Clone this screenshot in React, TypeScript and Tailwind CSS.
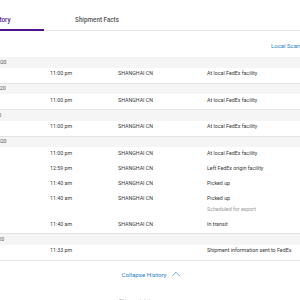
import { ChevronUp } from "lucide-react";

type Scan = { time: string; location: string; activity: string; note?: string };
type Day = { date: string; scans: Scan[] };

const HISTORY: Day[] = [
  {
    date: "Tuesday , 4/28/2020",
    scans: [{ time: "11:00 pm", location: "SHANGHAI CN", activity: "At local FedEx facility" }],
  },
  {
    date: "Monday , 4/27/2020",
    scans: [{ time: "11:00 pm", location: "SHANGHAI CN", activity: "At local FedEx facility" }],
  },
  {
    date: "Friday , 4/24/2020",
    scans: [{ time: "11:00 pm", location: "SHANGHAI CN", activity: "At local FedEx facility" }],
  },
  {
    date: "Tuesday , 4/21/2020",
    scans: [
      { time: "11:00 pm", location: "SHANGHAI CN", activity: "At local FedEx facility" },
      { time: "12:59 pm", location: "SHANGHAI CN", activity: "Left FedEx origin facility" },
      { time: "11:40 am", location: "SHANGHAI CN", activity: "Picked up" },
      { time: "11:40 am", location: "SHANGHAI CN", activity: "Picked up", note: "Scheduled for export" },
      { time: "11:40 am", location: "SHANGHAI CN", activity: "In transit" },
    ],
  },
  {
    date: "Monday, 4/20/2020",
    scans: [{ time: "11:33 pm", location: "", activity: "Shipment information sent to FedEx" }],
  },
];

function ScanRow({ scan }: { scan: Scan }) {
  return (
    <div className="grid grid-cols-[112px_68px_89px_1fr] pt-[3.5px] pb-[6.5px] text-[5.3px] leading-[5px] text-[#383838]">
      <div />
      <div>{scan.time}</div>
      <div>{scan.location}</div>
      <div>
        <div>{scan.activity}</div>
        {scan.note && <div className="mt-[6px] text-[#9a9a9a]">{scan.note}</div>}
      </div>
    </div>
  );
}

export default function App() {
  return (
    <div className="h-[300px] w-[300px] overflow-hidden bg-white font-['Roboto',sans-serif]">
      <div className="ml-[-62px] w-[420px]">
        <div className="flex border-b border-[#e6e6e6] pt-[16px]">
          <div className="-mb-px w-[106px] border-b-2 border-[#4d148c] pb-[4px] text-center text-[6.3px] font-medium text-[#4d148c]">
            Travel History
          </div>
          <div className="w-[106px] pb-[4px] text-center text-[6.3px] font-medium text-[#555]">
            Shipment Facts
          </div>
        </div>

        <div className="flex h-[26px] items-center pt-[3px] pl-[333px] text-[6px] text-[#2a83c6]">
          Local Scan Time
        </div>

        {HISTORY.map((day) => (
          <div key={day.date} className="border-b border-[#e3e3e3]">
            <div className="flex h-[10.5px] items-center bg-[#f5f5f5] pl-[20px] text-[5.3px] text-[#555]">
              {day.date}
            </div>
            {day.scans.map((scan, i) => (
              <ScanRow key={i} scan={scan} />
            ))}
          </div>
        ))}

        <div className="flex h-[28px] items-center justify-center gap-[2px] pt-[1px] pl-[8px] text-[6.2px] text-[#2a83c6]">
          <span>Collapse History</span>
          <ChevronUp size={14} strokeWidth={1.2} className="mt-[-2px]" />
        </div>

        <div className="mt-[9px] pl-[181px] text-[5.3px] text-[#999]">
          Shipment dates
        </div>
      </div>
    </div>
  );
}
